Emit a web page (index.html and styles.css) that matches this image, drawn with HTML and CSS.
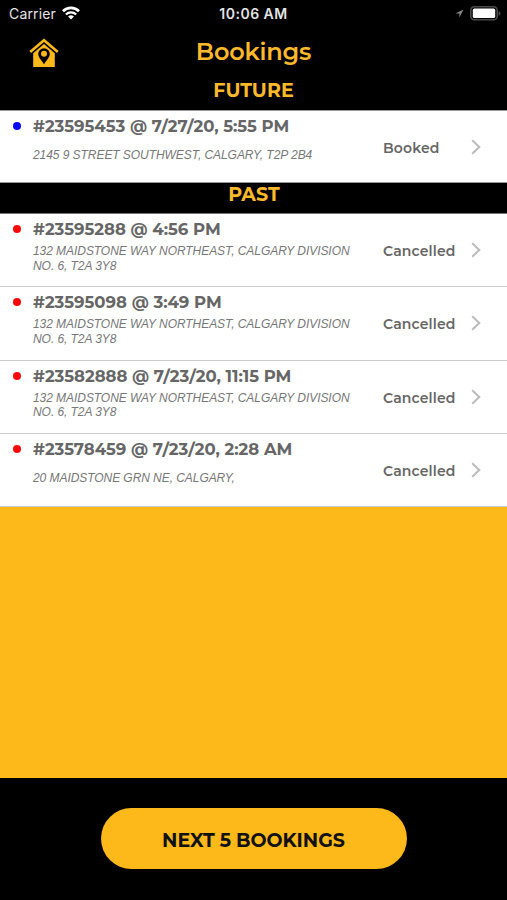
FILE: index.html
```html
<!DOCTYPE html>
<html lang="en">
<head>
    <meta charset="UTF-8">
    <meta name="viewport" content="width=device-width, initial-scale=1.0">
    <title>Bookings</title>
    <link rel="stylesheet" href="styles.css">
</head>
<body>
    <div class="screen">
        <div class="status-bar">
            <div class="carrier">
                <span>Carrier</span>
                <svg class="wifi" viewBox="0 0 18 14" width="18" height="14">
                    <path d="M1 5.2a11.5 11.5 0 0 1 16 0" fill="none" stroke="#fff" stroke-width="2.7"/>
                    <path d="M3.900 8.500a7.300 7.300 0 0 1 10.200 0" fill="none" stroke="#fff" stroke-width="2.400"/>
                    <path d="M9 13.600l-2.900-3a4.200 4.200 0 0 1 5.800 0z" fill="#fff"/>
                </svg>
            </div>
            <div class="time">10:06 AM</div>
            <div class="battery">
                <svg viewBox="0 0 9 9" width="9" height="9">
                    <path d="M8.5 .5L.4 4.4h4v4z" fill="#888"/>
                </svg>
                <svg viewBox="0 0 31 15" width="31" height="15">
                    <rect x=".8" y=".8" width="26.4" height="13" rx="3.6" fill="#000" stroke="#4a4a4c" stroke-width="1.6"/>
                    <rect x="2.8" y="2.6" width="22.4" height="9.4" rx="1.6" fill="#fff"/>
                    <path d="M28.6 5v5q1.9-.7 1.9-2.5T28.6 5z" fill="#4a4a4c"/>
                </svg>
            </div>
        </div>

        <div class="nav-bar">
            <a class="home">
                <svg viewBox="0 0 30 30" width="30" height="30">
                    <path d="M1.200 14L15 2.200 28.800 14" fill="none" stroke="#fdb819" stroke-width="2.600"/>
                    <path d="M4.200 15.300L15 6l10.800 9.300v13.700H4.200z" fill="#fdb819"/>
                    <path d="M15 26.400c-2.300-4-5.800-6.700-5.800-10.300a5.800 5.800 0 0 1 11.600 0c0 3.600-3.500 6.300-5.800 10.300z" fill="#000"/>
                    <circle cx="15" cy="15.800" r="3" fill="#fdb819"/>
                </svg>
            </a>
            <h1>Bookings</h1>
        </div>

        <h2 class="section-title section-future">FUTURE</h2>
        <div class="list list-future">
            <div class="booking">
                <span class="dot dot-blue"></span>
                <div class="info">
                    <div class="title">#23595453 @ 7/27/20, 5:55 PM</div>
                    <div class="address">2145 9 STREET SOUTHWEST, CALGARY, T2P 2B4</div>
                </div>
                <div class="status">Booked</div>
                <svg class="arrow" viewBox="0 0 10 16" width="10" height="16"><path d="M1.2 1.2L8.3 8l-7.1 6.800"/></svg>
            </div>
        </div>

        <h2 class="section-title section-past">PAST</h2>
        <div class="list list-past">
            <div class="booking">
                <span class="dot"></span>
                <div class="info">
                    <div class="title">#23595288 @ 4:56 PM</div>
                    <div class="address">132 MAIDSTONE WAY NORTHEAST, CALGARY DIVISION<br>NO. 6, T2A 3Y8</div>
                </div>
                <div class="status">Cancelled</div>
                <svg class="arrow" viewBox="0 0 10 16" width="10" height="16"><path d="M1.2 1.2L8.3 8l-7.1 6.800"/></svg>
            </div>
            <div class="booking">
                <span class="dot"></span>
                <div class="info">
                    <div class="title">#23595098 @ 3:49 PM</div>
                    <div class="address">132 MAIDSTONE WAY NORTHEAST, CALGARY DIVISION<br>NO. 6, T2A 3Y8</div>
                </div>
                <div class="status">Cancelled</div>
                <svg class="arrow" viewBox="0 0 10 16" width="10" height="16"><path d="M1.2 1.2L8.3 8l-7.1 6.800"/></svg>
            </div>
            <div class="booking">
                <span class="dot"></span>
                <div class="info">
                    <div class="title">#23582888 @ 7/23/20, 11:15 PM</div>
                    <div class="address">132 MAIDSTONE WAY NORTHEAST, CALGARY DIVISION<br>NO. 6, T2A 3Y8</div>
                </div>
                <div class="status">Cancelled</div>
                <svg class="arrow" viewBox="0 0 10 16" width="10" height="16"><path d="M1.2 1.2L8.3 8l-7.1 6.800"/></svg>
            </div>
            <div class="booking">
                <span class="dot"></span>
                <div class="info">
                    <div class="title">#23578459 @ 7/23/20, 2:28 AM</div>
                    <div class="address">20 MAIDSTONE GRN NE, CALGARY,</div>
                </div>
                <div class="status">Cancelled</div>
                <svg class="arrow" viewBox="0 0 10 16" width="10" height="16"><path d="M1.2 1.2L8.3 8l-7.1 6.800"/></svg>
            </div>
        </div>

        <div class="footer">
            <button class="next-button">NEXT 5 BOOKINGS</button>
        </div>
    </div>
</body>
</html>
```
FILE: styles.css
```css
*, *::before, *::after {
    box-sizing: border-box;
}
body {
    margin: 0;
    background-color: #fdb819;
    font-family: Montserrat, Inter, sans-serif;
}
.screen {
    display: flex;
    flex-direction: column;
    height: 900px;
    width: 507px;
}

/* top bars */
.status-bar {
    display: grid;
    grid-template-columns: 1fr auto 1fr;
    align-items: center;
    height: 27px;
    padding: 0 6px 0 9px;
    background-color: #000;
    color: #e4e4e4;
    font-family: Inter, sans-serif;
    font-size: 14px;
}
.carrier {
    display: flex;
    align-items: center;
    gap: 6px;
    letter-spacing: 0.15px;
}
.wifi {
    margin-top: -2px;
}
.time {
    margin-right: 3px;
    font-weight: 600;
    letter-spacing: 0.5px;
}
.battery {
    display: flex;
    align-items: center;
    justify-content: flex-end;
    gap: 6px;
}
.nav-bar {
    display: grid;
    grid-template-columns: 60px 1fr 60px;
    align-items: center;
    height: 50px;
    background-color: #000;
}
.home {
    padding: 1px 0 0 29px;
    height: 30px;
}
h1, h2 {
    margin: 0;
    color: #fdb82b;
    text-align: center;
}
h1 {
    font-size: 24px;
    font-weight: 600;
    line-height: 48px;
    letter-spacing: -0.2px;
}
.section-title {
    background-color: #000;
    font-size: 19px;
    font-weight: 700;
    letter-spacing: 0.1px;
}
.section-future {
    height: 33px;
    line-height: 28px;
}
.section-past {
    height: 30px;
    padding-left: 1px;
    line-height: 24px;
}

/* bookings */
.list {
    background-color: #fff;
}
.list-future {
    border-top: 1px solid #999;
}
.list-past {
    border-top: 1px solid #777;
}
.booking {
    display: grid;
    grid-template-columns: 33px 350px 88px 1fr;
    height: 73.3px;
    border-bottom: 1.5px solid #ccc;
    color: #666;
}
.list-future .booking {
    height: 72px;
    border-bottom: 1px solid #999;
}
.dot {
    width: 8px;
    height: 8px;
    margin: 11px 0 0 13px;
    border-radius: 50%;
    background-color: #fa0808;
}
.dot-blue {
    background-color: #0909f5;
}
.info {
    display: flex;
    flex-direction: column;
}
.title {
    height: 30px;
    font-size: 16.5px;
    font-weight: 700;
    line-height: 31px;
    white-space: nowrap;
}
.address {
    display: flex;
    flex-direction: column;
    justify-content: center;
    height: 29px;
    color: #777;
    font-family: "Liberation Sans", sans-serif;
    font-size: 12px;
    font-style: italic;
    letter-spacing: -0.06px;
    line-height: 14.5px;
    white-space: nowrap;
}
.status {
    align-self: center;
    padding-top: 2px;
    font-size: 14px;
    font-weight: 600;
    letter-spacing: 0.15px;
}
.arrow {
    align-self: center;
}
.arrow path {
    fill: none;
    stroke: #bbb;
    stroke-width: 2;
}

/* bottom bar */
.footer {
    height: 122px;
    margin-top: auto;
    padding-top: 30px;
    background-color: #000;
    text-align: center;
}
.next-button {
    width: 306px;
    height: 61px;
    padding: 3px 0 0;
    border: 0;
    border-radius: 31px;
    background-color: #fdb819;
    color: #111;
    font-family: Montserrat, Inter, sans-serif;
    font-size: 19px;
    font-weight: 700;
    word-spacing: -0.5px;
}
```
